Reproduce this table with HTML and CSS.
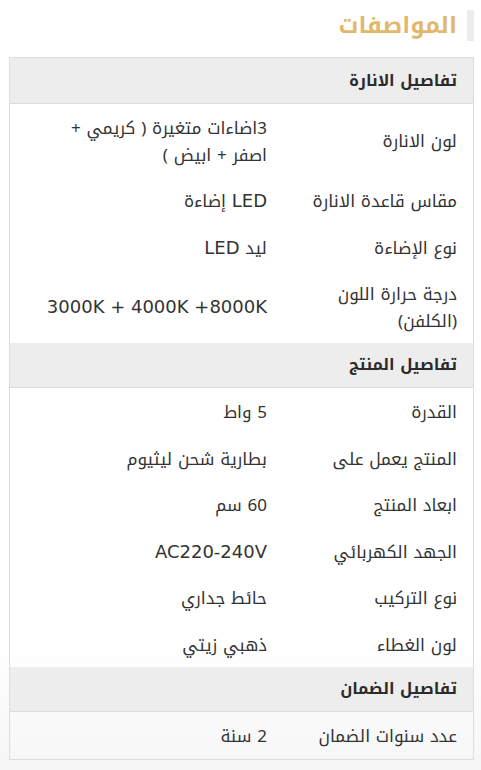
FILE: index.html
```html
<!DOCTYPE html>
<html lang="ar" dir="rtl">
<head>
<meta charset="utf-8">
<title>المواصفات</title>
<link rel="stylesheet" href="styles.css">
</head>
<body>
<div class="specs">
  <h2 class="specs-title">المواصفات</h2>
  <div class="specs-table">
    <div class="group-head">تفاصيل الانارة</div>
    <div class="row"><div class="label">لون الانارة</div><div class="value">3اضاءات متغيرة ( كريمي + اصفر + ابيض )</div></div>
    <div class="row"><div class="label">مقاس قاعدة الانارة</div><div class="value"><span class="latin">LED</span> إضاءة</div></div>
    <div class="row"><div class="label">نوع الإضاءة</div><div class="value">ليد <span class="latin">LED</span></div></div>
    <div class="row"><div class="label">درجة حرارة اللون (الكلفن)</div><div class="value"><span class="latin">3000K + 4000K +8000K</span></div></div>

    <div class="group-head">تفاصيل المنتج</div>
    <div class="row"><div class="label">القدرة</div><div class="value">5 واط</div></div>
    <div class="row"><div class="label">المنتج يعمل على</div><div class="value">بطارية شحن ليثيوم</div></div>
    <div class="row"><div class="label">ابعاد المنتج</div><div class="value">60 سم</div></div>
    <div class="row"><div class="label">الجهد الكهربائي</div><div class="value"><span class="latin">AC220-240V</span></div></div>
    <div class="row"><div class="label">نوع التركيب</div><div class="value">حائط جداري</div></div>
    <div class="row"><div class="label">لون الغطاء</div><div class="value">ذهبي زيتي</div></div>

    <div class="group-head">تفاصيل الضمان</div>
    <div class="row"><div class="label">عدد سنوات الضمان</div><div class="value">2 سنة</div></div>
  </div>
</div>
</body>
</html>
```

FILE: styles.css
```css
html, body {
  margin: 0;
  padding: 0;
  background: #ffffff;
}

body {
  font-family: "Noto Kufi Arabic", "DejaVu Sans", sans-serif;
  color: #333333;
  direction: rtl;
}

.latin {
  font-family: "DejaVu Sans", sans-serif;
  font-size: 18px;
}

.specs {
  padding: 10px 7px 10px 9px;
  border-bottom: 1px solid #dddddd;
  background: linear-gradient(to bottom, #ffffff 0, #ffffff 640px, #f6f6f6 100%);
}

.specs-title {
  margin: 0 0 16px 0;
  padding-right: 10px;
  border-right: 7px solid #ececec;
  height: 31px;
  line-height: 31px;
  font-size: 23px;
  font-weight: bold;
  color: #e2b96c;
}

.specs-table {
  border: 1px solid #dddddd;
}

.group-head {
  background: #ededed;
  padding: 9px 16px;
  line-height: 26px;
  font-size: 16px;
  font-weight: bold;
  color: #2b2b2b;
  border-bottom: 1px solid #dddddd;
}

.specs-table > .group-head:first-child {
  padding-top: 10px;
}

.specs-table > .group-head:last-of-type {
  background: #eaeaea;
}

.row {
  display: grid;
  grid-template-columns: 206px 1fr;
  align-items: center;
  font-size: 17px;
  line-height: 26.5px;
}

.label {
  padding: 11px 16px 9px 36px;
}

.value {
  padding: 11px 0 9px 30px;
}
```
